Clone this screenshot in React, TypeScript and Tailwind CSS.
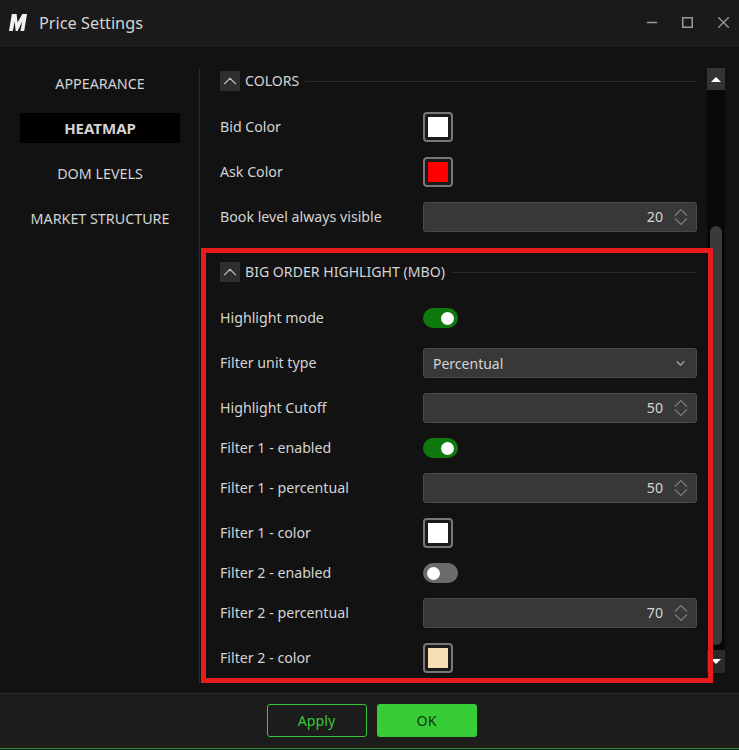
import React from 'react';
import { ChevronUp, ChevronDown } from 'lucide-react';

const navItems = ['APPEARANCE', 'HEATMAP', 'DOM LEVELS', 'MARKET STRUCTURE'];

const Label = ({ children }: { children: React.ReactNode }) => (
  <span className="w-[203px] shrink-0 text-[14.2px] text-[#d4d4d4]">{children}</span>
);

const Row = ({ label, tall = true, children }: { label: string; tall?: boolean; children: React.ReactNode }) => (
  <div className={`flex items-center ${tall ? 'h-[30px]' : 'h-[20px]'}`}>
    <Label>{label}</Label>
    {children}
  </div>
);

const Swatch = ({ color }: { color: string }) => (
  <div className="flex h-[30px] w-[30px] items-center justify-center rounded-[4px] border-2 border-[#777777] bg-[#1a1a1a]">
    <div className={`h-[20px] w-[20px] ${color}`} />
  </div>
);

const Toggle = ({ on }: { on: boolean }) => (
  <div className={`flex h-[20px] w-[35px] items-center rounded-full px-[4px] ${on ? 'justify-end bg-[#0e7a0d]' : 'justify-start bg-[#6b6b6b]'}`}>
    <div className="h-[13px] w-[13px] rounded-full bg-white" />
  </div>
);

const NumberInput = ({ value }: { value: number }) => (
  <div className="flex h-[30px] w-[274px] items-center justify-end rounded-[3px] border border-[#4a4a4a] bg-[#383838] pr-[8px]">
    <span className="mr-[11px] text-[14.2px] text-[#d4d4d4]">{value}</span>
    <svg width="14" height="18" viewBox="0 0 14 18" fill="none" stroke="#7f7f7f" strokeWidth="1.1">
      <path d="M1 7.5 7 1.5 13 7.5" />
      <path d="M1 10.5 7 16.5 13 10.5" />
    </svg>
  </div>
);

const SectionHeader = ({ title }: { title: string }) => (
  <div className="flex h-[30px] items-center">
    <div className="flex h-[20px] w-[20px] shrink-0 items-center justify-center bg-[#2e2e2e] text-[#bdbdbd]">
      <ChevronUp size={22} strokeWidth={1.2} className="shrink-0" />
    </div>
    <span className="ml-[5px] text-[14.1px] text-[#d4d4d4]">{title}</span>
    <div className="ml-[6px] h-px flex-1 bg-[#2a2a2a]" />
  </div>
);

const App = () => {
  return (
    <div className="relative flex h-[750px] w-[739px] flex-col overflow-hidden bg-[#121212] font-['Noto_Sans',sans-serif]">
      <header className="flex h-[46px] shrink-0 items-center border-b border-[#252525] bg-[#1a1a1a] pl-[9px] pr-[10px]">
        <svg width="19" height="19" viewBox="0 0 20 20" className="shrink-0">
          <path d="M3 1h5l1 9 5-9h5l-3 18h-4l2-10-5 10h-2L6 9 4 19H0z" fill="#f2f2f2" />
        </svg>
        <span className="ml-[11px] pt-[2px] text-[16.3px] text-[#d4d4d4]">Price Settings</span>
        <div className="ml-auto flex items-center gap-[25px]">
          <svg width="10" height="11" viewBox="0 0 10 11" stroke="#9a9a9a" strokeWidth="1.5">
            <path d="M0 5.5h10" />
          </svg>
          <svg width="11" height="11" viewBox="0 0 11 11" fill="none" stroke="#9a9a9a" strokeWidth="1.5">
            <rect x="0.75" y="0.75" width="9.5" height="9.5" />
          </svg>
          <svg width="11" height="11" viewBox="0 0 11 11" stroke="#9a9a9a" strokeWidth="1.3">
            <path d="M0 0l11 11M11 0 0 11" />
          </svg>
        </div>
      </header>

      <div className="flex min-h-0 flex-1 pt-[22px] pb-[10px]">
        <nav className="flex w-[200px] shrink-0 flex-col gap-[15px] border-r border-[#2a2a2a] pl-[20px] pr-[19px]">
          {navItems.map((item) => (
            <div
              key={item}
              className={`flex h-[30px] items-center justify-center whitespace-nowrap rounded-[3px] ${
                item === 'HEATMAP' ? 'bg-black text-[15px] font-bold text-[#d4d4d4]' : 'pt-[2px] text-[14.3px] text-[#d4d4d4]'
              }`}
            >
              {item}
            </div>
          ))}
        </nav>

        <main className="-mt-[2px] flex w-[497px] shrink-0 flex-col pl-[20px]">
          <SectionHeader title="COLORS" />
          <div className="mt-[16px] flex flex-col gap-[15px]">
            <Row label="Bid Color"><Swatch color="bg-white" /></Row>
            <Row label="Ask Color"><Swatch color="bg-[#ff0000]" /></Row>
            <Row label="Book level always visible"><NumberInput value={20} /></Row>
          </div>

          <div className="mt-[25px]">
            <SectionHeader title="BIG ORDER HIGHLIGHT (MBO)" />
          </div>
          <div className="mt-[16px] flex flex-col gap-[15px]">
            <Row label="Highlight mode"><Toggle on /></Row>
            <Row label="Filter unit type">
              <div className="flex h-[30px] w-[274px] items-center justify-between rounded-[3px] border border-[#4a4a4a] bg-[#383838] pl-[9px] pr-[9px]">
                <span className="text-[14px] text-[#d4d4d4]">Percentual</span>
                <ChevronDown size={13} strokeWidth={3} className="text-[#8f8f8f]" />
              </div>
            </Row>
            <Row label="Highlight Cutoff"><NumberInput value={50} /></Row>
            <Row label="Filter 1 - enabled" tall={false}><Toggle on /></Row>
            <Row label="Filter 1 - percentual"><NumberInput value={50} /></Row>
            <Row label="Filter 1 - color"><Swatch color="bg-white" /></Row>
            <Row label="Filter 2 - enabled" tall={false}><Toggle on={false} /></Row>
            <Row label="Filter 2 - percentual"><NumberInput value={70} /></Row>
            <Row label="Filter 2 - color"><Swatch color="bg-[#f5deb3]" /></Row>
          </div>
        </main>

        <aside className="ml-[10px] flex h-[605px] w-[18px] shrink-0 flex-col bg-[#090909]">
          <div className="flex h-[22px] shrink-0 items-center justify-center bg-[#333333]">
            <div className="h-0 w-0 border-x-[5px] border-b-[5px] border-x-transparent border-b-white" />
          </div>
          <div className="mx-auto mt-[136px] h-[419px] w-[12px] rounded-[6px] bg-[#3a3a3a]" />
          <div className="mt-auto flex h-[23px] shrink-0 items-center justify-center bg-[#2a2a2a]">
            <div className="h-0 w-0 border-x-[5px] border-t-[5px] border-x-transparent border-t-white" />
          </div>
        </aside>
      </div>

      <footer className="flex h-[55px] shrink-0 items-start justify-center gap-[10px] border-t border-[#2a2a2a] bg-[#1c1c1c] pl-[4px] pt-[10px]">
        <button className="h-[33px] w-[100px] rounded-[3px] border border-[#37c837] text-[14.2px] text-[#37c837]">Apply</button>
        <button className="h-[33px] w-[100px] rounded-[3px] bg-[#37cd37] text-[14.2px] text-[#143214]">OK</button>
      </footer>
      <div className="h-px shrink-0 bg-[#2e8b2e]" />
      <div className="h-px shrink-0 bg-[#1c1c1c]" />

      {/* annotation drawn over the screenshot */}
      <div className="pointer-events-none absolute left-[201px] top-[248px] h-[435px] w-[512px] border-[5px] border-[#e81c1c]" />
    </div>
  );
};

export default App;
